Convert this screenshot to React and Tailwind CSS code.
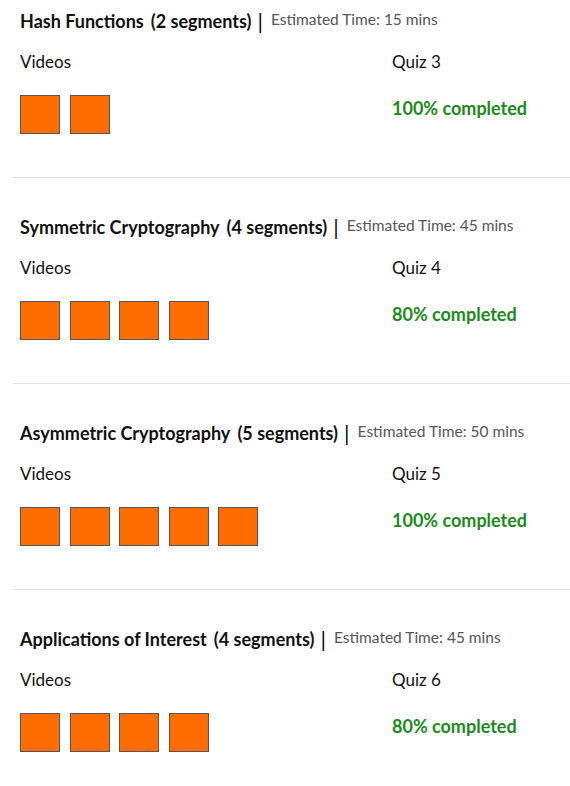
const modules = [
  { title: "Hash Functions", segments: 2, time: 15, quiz: 3, done: 100 },
  { title: "Symmetric Cryptography", segments: 4, time: 45, quiz: 4, done: 80 },
  { title: "Asymmetric Cryptography", segments: 5, time: 50, quiz: 5, done: 100 },
  { title: "Applications of Interest", segments: 4, time: 45, quiz: 6, done: 80 },
];

function Module({ m, first }) {
  return (
    <section
      className={
        "ml-[13px] pl-[7px] pt-[9px] pb-[43px] border-b border-[#e5e5e5] " +
        (first ? "" : "mt-[28px]")
      }
    >
      <div className="flex items-center h-6 text-[#111]">
        <h2 className="text-[18px] font-bold">{m.title}</h2>
        <span className="ml-[7px] text-[18px] font-bold">({m.segments} segments)</span>
        <span className="ml-[6px] text-[22px] leading-none">|</span>
        <span className="ml-[8px] -mt-[2px] text-[15.5px] text-[#555]">
          Estimated Time: {m.time} mins
        </span>
      </div>
      <div className="grid grid-cols-[372px_1fr] mt-[17px]">
        <div>
          <p className="text-[17px] leading-6 text-[#111]">Videos</p>
          <div className="flex gap-[9.5px] mt-[21px]">
            {Array.from({ length: m.segments }).map((_, i) => (
              <div
                key={i}
                className="w-[40px] h-[39px] bg-[#ff6d00] border border-[#505560]"
              />
            ))}
          </div>
        </div>
        <div>
          <p className="text-[17px] leading-6 text-[#111]">Quiz {m.quiz}</p>
          <p className="mt-[22px] text-[18px] font-bold leading-6 text-[#1b8a1b]">
            {m.done}% completed
          </p>
        </div>
      </div>
    </section>
  );
}

export default function App() {
  return (
    <div className="w-[570px] bg-white font-['Lato',sans-serif]">
      {modules.map((m, i) => (
        <Module key={m.title} m={m} first={i === 0} />
      ))}
    </div>
  );
}
